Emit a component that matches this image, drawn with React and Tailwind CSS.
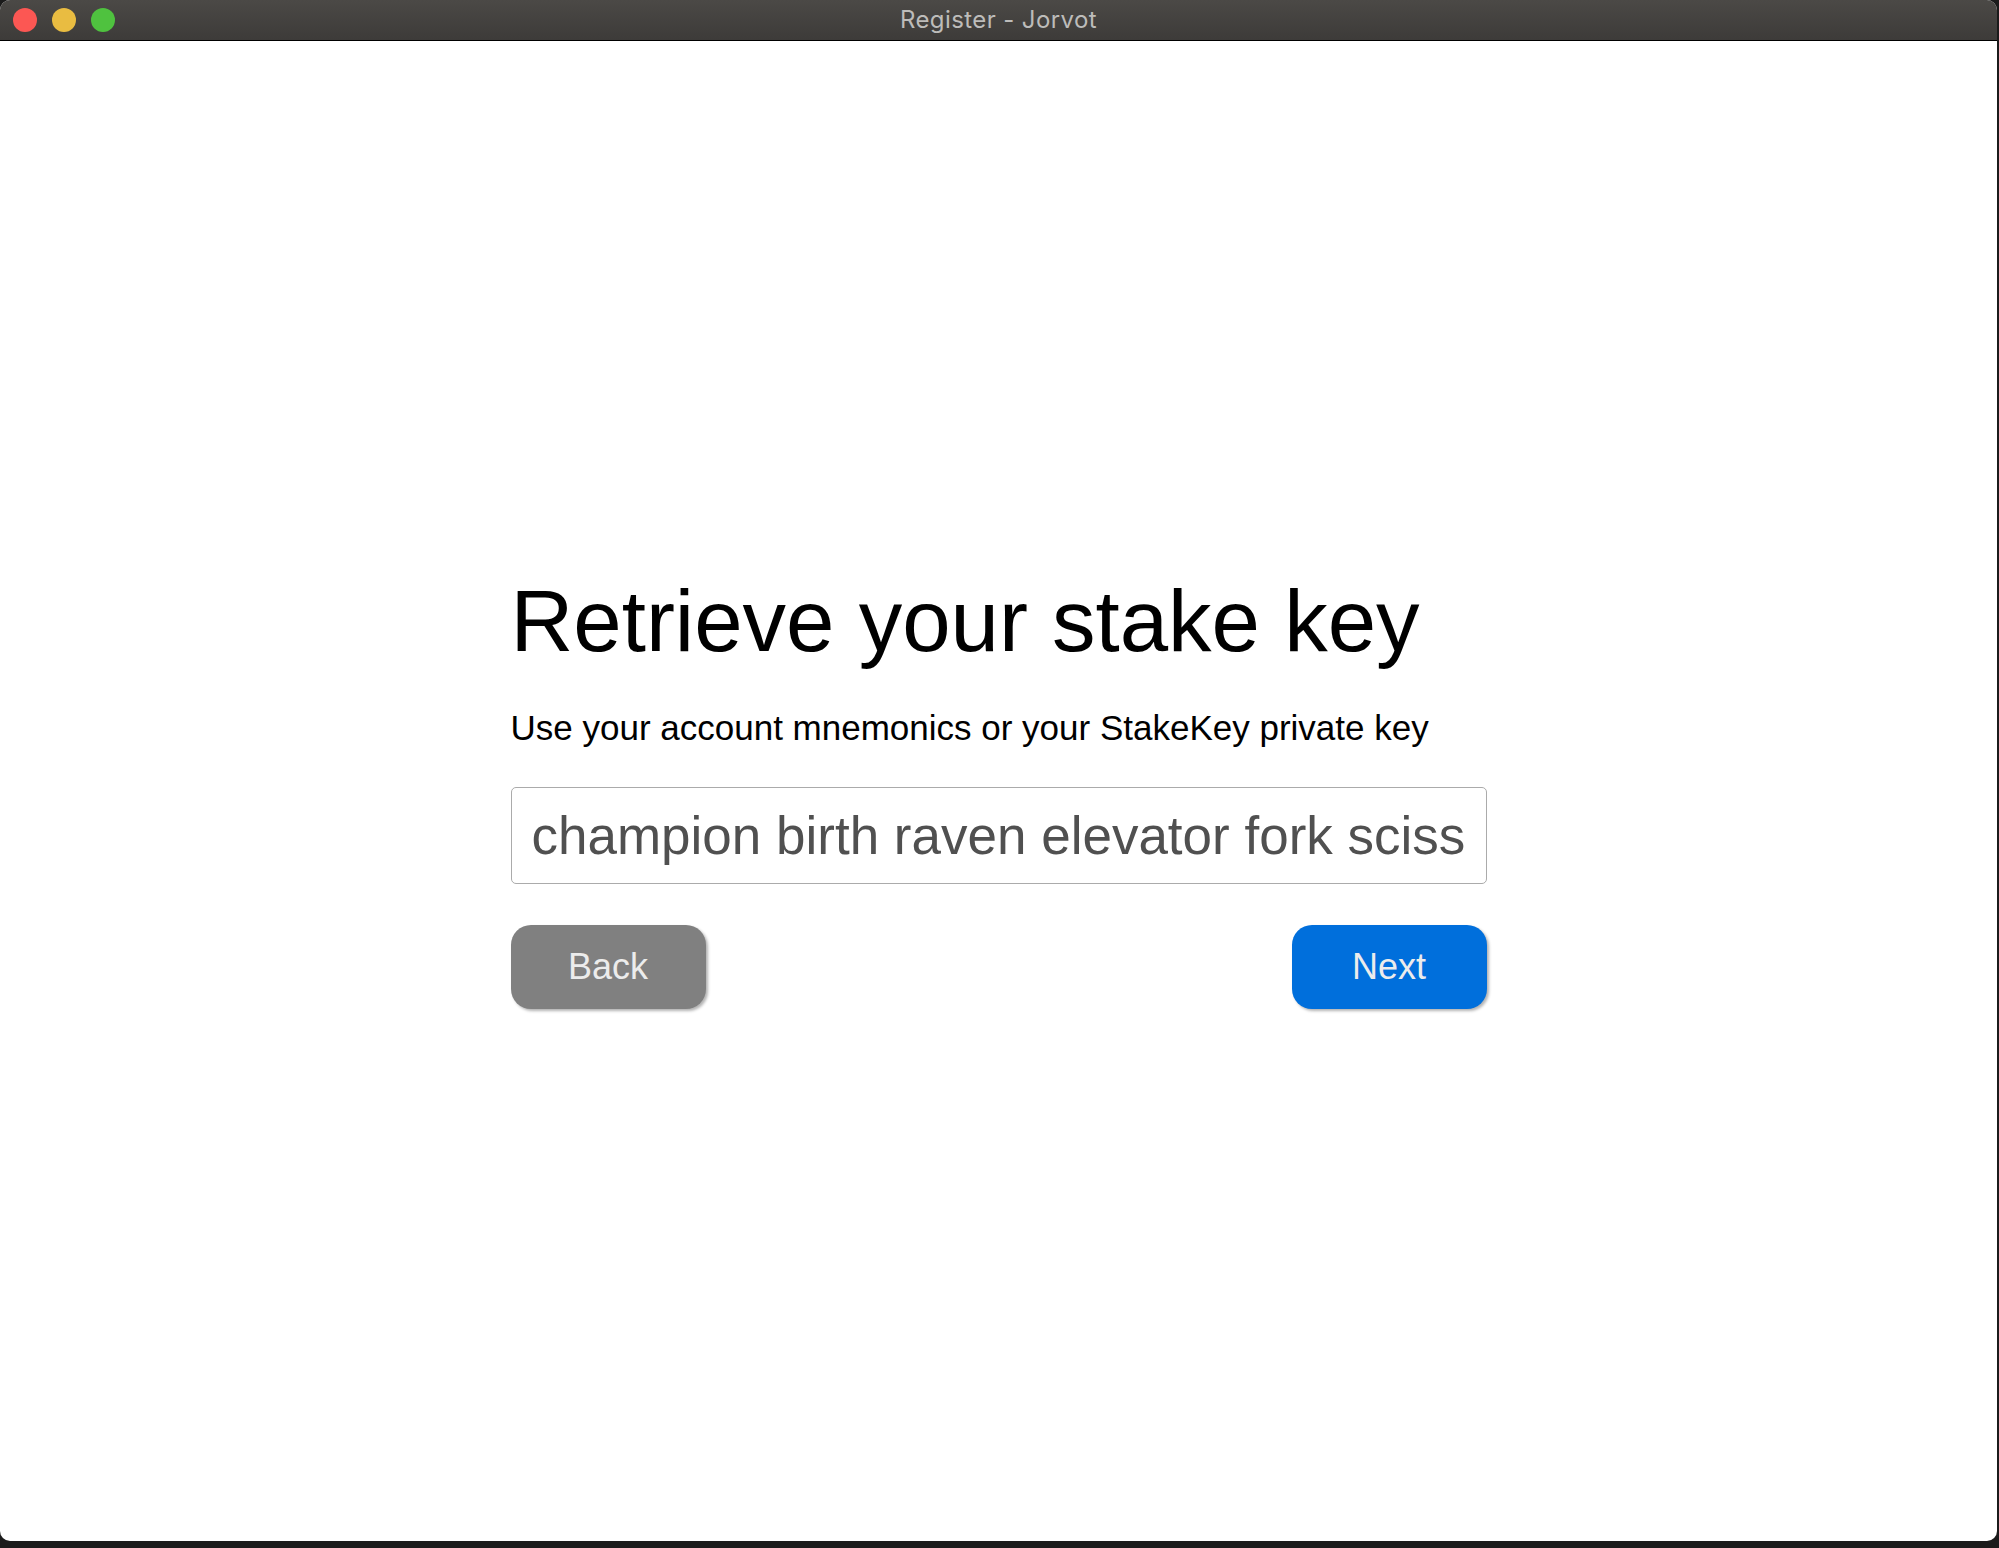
import React, { useState } from 'react';

const App = () => {
  const [value, setValue] = useState(
    'champion birth raven elevator fork scissors ocean tribe wisdom velvet'
  );

  return (
    <div className="h-[1548px] w-full bg-[#1b1b1b] flex flex-col overflow-hidden font-['Liberation_Sans',Arial,sans-serif]">
      {/* Window */}
      <div className="h-[1541px] mr-[2px] flex flex-col rounded-[10px] overflow-hidden bg-white">
        {/* Title bar */}
        <div className="relative h-[41px] shrink-0 bg-gradient-to-b from-[#4b4946] to-[#3d3b39] border-b border-black flex items-center">
          <div className="flex items-center gap-[15px] pl-[13px]">
            <span className="block h-[24px] w-[24px] rounded-full bg-[#fc5753]" />
            <span className="block h-[24px] w-[24px] rounded-full bg-[#e9bc41]" />
            <span className="block h-[24px] w-[24px] rounded-full bg-[#4fc23f]" />
          </div>
          <div className="absolute inset-0 flex items-center justify-center pointer-events-none">
            <span className="text-[24px] tracking-[0.4px] text-[#bdbcba] font-['Inter',sans-serif]">Register - Jorvot</span>
          </div>
        </div>

        {/* Page content */}
        <div className="flex-1 flex items-center justify-center pt-[4px]">
          <div className="w-[976px] flex flex-col">
            <h1 className="text-[87px] leading-none text-black">Retrieve your stake key</h1>
            <p className="mt-[46px] text-[35px] leading-none text-black">
              Use your account mnemonics or your StakeKey private key
            </p>
            <input
              value={value}
              onChange={(e) => setValue(e.target.value)}
              className="mt-[42px] h-[97px] w-full rounded-[5px] border border-[#ababab] px-[20px] text-[53px] text-[#505050] outline-none"
            />
            <div className="mt-[41px] flex justify-between">
              <button className="h-[84px] w-[195px] rounded-[20px] bg-[#808080] text-[36px] text-[#ececec] shadow-[2px_2px_3px_rgba(0,0,0,0.3)]">
                Back
              </button>
              <button className="h-[84px] w-[195px] rounded-[20px] bg-[#006fdc] text-[36px] text-[#ececec] shadow-[2px_2px_3px_rgba(0,0,0,0.3)]">
                Next
              </button>
            </div>
          </div>
        </div>
      </div>
    </div>
  );
};

export default App;
